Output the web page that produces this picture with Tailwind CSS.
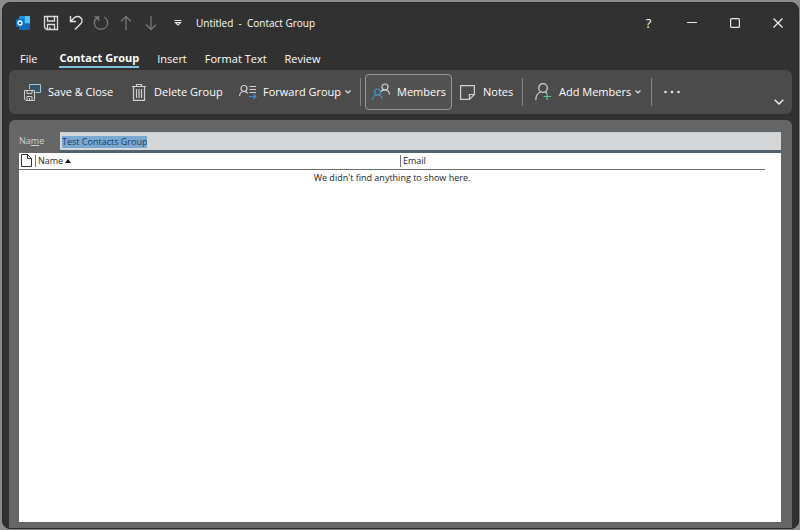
<!DOCTYPE html>
<html lang="en">
<head>
    <meta charset="UTF-8">
    <meta name="viewport" content="width=device-width, initial-scale=1.0">
    <title>Untitled - Contact Group</title>
    <script src="https://cdn.jsdelivr.net/npm/@tailwindcss/browser@4"></script>
</head>
<body class="bg-[#8b8d8c] font-['Open_Sans','Noto_Sans',sans-serif] text-[11px] leading-4 text-white">
    <div class="h-screen pt-[2px] pl-[2px] pr-px pb-px">
        <div class="h-full flex flex-col rounded-lg bg-[#313131] border border-[#272727] overflow-hidden">

            <!-- Title bar -->
            <header class="flex items-center h-10 shrink-0 pl-[13px]">
                <svg class="w-[14px] h-[14px] shrink-0" viewBox="0 0 14 14">
                    <rect x="3" y="0" width="11" height="14" rx="1" fill="#1c8fdc"/>
                    <path d="M9 0h4a1 1 0 0 1 1 1v6H9z" fill="#4cc2f5"/>
                    <path d="M3 7l11 1v5a1 1 0 0 1-1 1H4a1 1 0 0 1-1-1z" fill="#1169b8"/>
                    <rect x="0" y="3" width="8" height="8" rx="1" fill="#0a6fc8"/>
                    <circle cx="4" cy="7" r="2" fill="none" stroke="#fff" stroke-width="1.3"/>
                </svg>
                <div class="flex items-center ml-2 [&>button]:w-[25px] [&>button]:h-6 [&>button]:flex [&>button]:items-center [&>button]:justify-center">
                    <button aria-label="Save">
                        <svg class="w-4 h-4" viewBox="0 0 16 16" fill="none" stroke="#dedede" stroke-width="1.3"><path d="M1.5 1.5h13v13h-11l-2-2zM4.5 1.5v4.500h7v-4.500M4.500 14.500v-5h7v5M7 12v2"/></svg>
                    </button>
                    <button aria-label="Undo">
                        <svg class="w-4 h-4" viewBox="0 0 16 16" fill="none" stroke="#e4e4e4" stroke-width="1.4"><path d="M2.500 1v5.500h5.500M2.500 6.500L6 3c2-2 5-2 6.700-.3s1.700 4.300 0 6L7 14.500"/></svg>
                    </button>
                    <button aria-label="Redo">
                        <svg class="w-4 h-4" viewBox="0 0 16 16" fill="none" stroke="#777" stroke-width="1.4"><path d="M1.500 2h4v4M5.500 2.500C2.500 3.500 1 6 1.500 9c.6 3.200 3.300 5.200 6.500 5.200s6-2.200 6.500-5.200c.5-3-1-5.700-3.500-7"/></svg>
                    </button>
                    <button aria-label="Previous item">
                        <svg class="w-4 h-4" viewBox="0 0 16 16" fill="none" stroke="#777" stroke-width="1.3"><path d="M8 15V1.500M3 6.500l5-5 5 5"/></svg>
                    </button>
                    <button aria-label="Next item">
                        <svg class="w-4 h-4" viewBox="0 0 16 16" fill="none" stroke="#777" stroke-width="1.3"><path d="M8 1v13.500M3 9.500l5 5 5-5"/></svg>
                    </button>
                    <button aria-label="Customize quick access toolbar" class="ml-[2px]">
                        <svg class="w-2 h-2" viewBox="0 0 8 8" fill="none" stroke="#e4e4e4"><path d="M.5 1.500h7M1.500 3.500h5L4 6z" stroke-width="1.200"/></svg>
                    </button>
                </div>
                <h1 class="ml-[6px] text-[10px] whitespace-pre">Untitled  -  Contact Group</h1>
                <div class="flex ml-auto -mr-px [&>button]:w-[43px] [&>button]:h-6 [&>button]:flex [&>button]:items-center [&>button]:justify-center">
                    <button aria-label="Help" class="text-[13px]">?</button>
                    <button aria-label="Minimize">
                        <svg class="w-[10px] h-[10px]" viewBox="0 0 10 10" stroke="#e8e8e8"><path d="M0 4.500h10"/></svg>
                    </button>
                    <button aria-label="Maximize">
                        <svg class="w-[10px] h-[10px]" viewBox="0 0 10 10" fill="none" stroke="#e8e8e8" stroke-width="1.200"><rect x=".6" y=".6" width="8.800" height="8.800" rx="1"/></svg>
                    </button>
                    <button aria-label="Close">
                        <svg class="w-[10px] h-[10px]" viewBox="0 0 10 10" stroke="#f0f0f0" stroke-width="1.200"><path d="M.5.500l9 9M9.500.500l-9 9"/></svg>
                    </button>
                </div>
            </header>

            <!-- Ribbon tabs -->
            <nav class="flex shrink-0 h-[27px] pt-[6px] pl-[17px] gap-[18px] items-start [&>button]:h-[19px] [&>button]:whitespace-nowrap">
                <button class="mr-1">File</button>
                <button class="font-bold border-b-2 border-[#7fbfe0]">Contact Group</button>
                <button>Insert</button>
                <button>Format Text</button>
                <button>Review</button>
            </nav>

            <!-- Ribbon -->
            <div class="flex items-center shrink-0 h-11 mx-[6px] pl-[15px] pr-2 rounded-md bg-[#4b4b4b] whitespace-nowrap [&>button]:flex [&>button]:items-center [&>button]:shrink-0">
                <button class="w-[108px] gap-[7px]">
                    <svg class="w-[17px] h-[17px]" viewBox="0 0 17 17" fill="none" stroke="#d0d0d0">
                        <path d="M5.500 5V.500h11v8h-5" stroke="#a9c4d6" fill="#35556b"/>
                        <path d="M.5 6.500h10v10H2l-1.500-1.500zM3 6.500v3h5v-3M3 16.500v-4h5v4M5.500 14v2" fill="#4b4b4b"/>
                    </svg>
                    Save &amp; Close
                </button>
                <button class="w-[107px] gap-[8px]">
                    <svg class="w-[14px] h-[17px]" viewBox="0 0 14 17" fill="none" stroke="#d0d0d0" stroke-width="1.200"><path d="M0 2.500h14M4.500 2.500v-2h5v2M1.500 2.500v13.900h11V2.500M4.500 5v9M7 5v9M9.500 5v9"/></svg>
                    Delete Group
                </button>
                <button class="w-[121px] gap-[6px]">
                    <svg class="w-[18px] h-[16px]" viewBox="0 0 18 16" fill="none" stroke="#d4d4d4" stroke-width="1.200">
                        <circle cx="5" cy="4.500" r="3"/><path d="M.6 12c0-3 1.900-4.500 4.400-4.500 1.600 0 3 .6 3.800 1.900M10.500 2.500H17M10.500 5.500H17M10.500 8.500H17"/>
                        <path d="M10 12.500h7M14.500 10l2.500 2.500-2.500 2.500" stroke="#4a86d8"/>
                    </svg>
                    Forward Group
                    <svg class="w-[6px] h-[6px] -ml-[2px]" viewBox="0 0 6 6" fill="none" stroke="#e4e4e4" stroke-width="1.200"><path d="M.5 1.500L3 4l2.500-2.500"/></svg>
                </button>
                <div class="w-px h-7 bg-[#858585] mr-1 shrink-0"></div>
                <button class="w-[87px] h-9 pl-[6px] gap-[7px] rounded border border-[#9a9a9a] bg-[#525252]">
                    <svg class="w-[18px] h-[18px]" viewBox="0 0 18 18" fill="none" stroke-width="1.200">
                        <g stroke="#d4d4d4"><circle cx="13" cy="4" r="3"/><path d="M8.500 9c.6-1.400 2.300-2 4.500-2 2.700 0 4.400 1.300 4.400 4.500"/></g>
                        <g stroke="#4592c2"><circle cx="5.500" cy="9" r="3"/><path d="M.6 17c0-3.500 2-5 4.900-5 2.700 0 4.500 1.500 4.500 4"/></g>
                    </svg>
                    Members
                </button>
                <button class="w-[70px] pl-2 gap-[8px]">
                    <svg class="w-[15px] h-[15px]" viewBox="0 0 15 15" fill="none" stroke="#d0d0d0" stroke-width="1.200"><path d="M.6.600h13.800v8.900l-5 4.900H.600zM14.400 9.500h-5v4.900"/></svg>
                    Notes
                </button>
                <div class="w-px h-7 bg-[#858585] mr-3 shrink-0"></div>
                <button class="w-[116px] gap-[7px]">
                    <svg class="w-[17px] h-[18px]" viewBox="0 0 17 18" fill="none" stroke="#d4d4d4" stroke-width="1.200">
                        <circle cx="8" cy="5" r="4.300"/><path d="M.8 17c0-4.500 1.700-7 5-8M10 8.800l2 1.400"/>
                        <path d="M12 10v7M8.500 13.500h7.500" stroke="#5fc48c"/>
                    </svg>
                    Add Members
                    <svg class="w-[6px] h-[6px] -ml-[3px]" viewBox="0 0 6 6" fill="none" stroke="#e4e4e4" stroke-width="1.200"><path d="M.5 1.500L3 4l2.500-2.500"/></svg>
                </button>
                <div class="w-px h-7 bg-[#858585] mr-3 shrink-0"></div>
                <button aria-label="More commands">
                    <svg class="w-[16px] h-1" viewBox="0 0 16 4" fill="#e4e4e4"><circle cx="1.500" cy="2" r="1.300"/><circle cx="8" cy="2" r="1.300"/><circle cx="14.500" cy="2" r="1.300"/></svg>
                </button>
                <button aria-label="Ribbon display options" class="ml-auto self-end h-6">
                    <svg class="w-[10px] h-[6px]" viewBox="0 0 10 6" fill="none" stroke="#f0f0f0" stroke-width="1.400"><path d="M.7.700L5 5 9.300.700"/></svg>
                </button>
            </div>

            <!-- Group editor -->
            <main class="flex flex-col grow min-h-0 mt-[6px] mx-[6px] pl-[10px] pr-[11px] pt-3 pb-[6px] rounded-t-md bg-[#666666] text-[9px] leading-3">
                <div class="flex items-center shrink-0 h-[18px]">
                    <label for="group-name" class="w-[41px] text-[#d0d0d0]">Na<u>m</u>e</label>
                    <div class="flex items-center grow h-full pl-[2px] bg-[#d4d6d8] border-t border-[#c3d0da]">
                        <input id="group-name" type="text" value="Test Contacts Group" class="field-sizing-content h-3 bg-[#79a9d3] text-[#1d3b5c] outline-none">
                    </div>
                </div>
                <div class="h-[3px] shrink-0 bg-[#4f626e] ml-[41px]"></div>
                <div class="grow bg-white text-[#262626]">
                    <table class="w-[calc(100%-16px)] table-fixed">
                        <thead>
                            <tr class="h-4 border-b border-[#6e6e6e] text-left [&>th]:p-0 [&>th]:font-normal">
                                <th class="w-4" aria-label="Item type">
                                    <svg class="w-[11px] h-[13px] ml-[2px]" viewBox="0 0 11 13" fill="none" stroke="#333"><path d="M.5.500h6l4 4v8H.500zM6.500.500v4h4"/></svg>
                                </th>
                                <th class="w-[365px]">
                                    <div class="flex items-center gap-[2px] h-3 pl-[2px] border-l border-[#777]">
                                        Name
                                        <svg class="w-[6px] h-[4px]" viewBox="0 0 6 4" fill="#111"><path d="M0 4l3-4 3 4z"/></svg>
                                    </div>
                                </th>
                                <th><div class="h-3 pl-[2px] border-l border-[#777]">Email</div></th>
                            </tr>
                        </thead>
                        <tbody>
                            <tr><td colspan="3" class="p-0 pt-[2px] text-center">We didn't find anything to show here.</td></tr>
                        </tbody>
                    </table>
                </div>
            </main>
        </div>
    </div>
</body>
</html>
